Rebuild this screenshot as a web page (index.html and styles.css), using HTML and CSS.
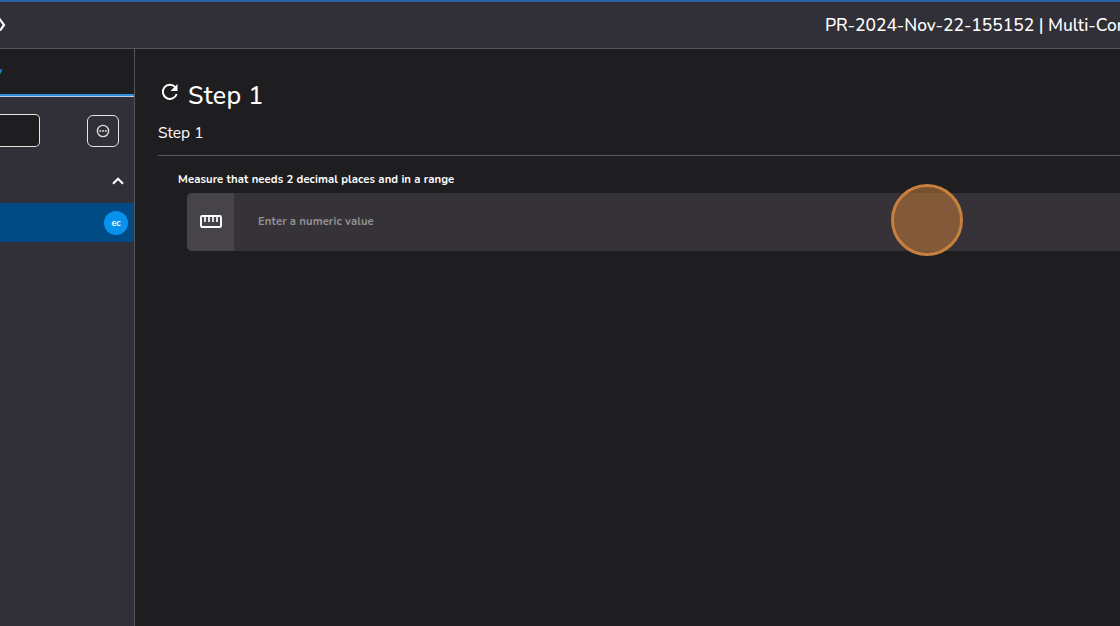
FILE: index.html
```html
<!DOCTYPE html>
<html lang="en">
<head>
  <meta charset="UTF-8">
  <title>Step 1</title>
  <link rel="stylesheet" href="styles.css">
</head>
<body>
  <header class="topbar">
    <svg class="back" width="6" height="18" viewBox="0 0 6 18"><path d="M-4 9L0 3.500L4 9L0 14.500" fill="none" stroke="#fff" stroke-width="2.200"/></svg>
    <span class="title">PR-2024-Nov-22-155152 | Multi-Con</span>
  </header>

  <div class="page">
    <aside class="sidebar">
      <div class="tab"><span>y</span></div>
      <div class="tools">
        <div class="search"></div>
        <button class="more" aria-label="More">
          <svg width="14" height="14" viewBox="0 0 14 14"><circle cx="7" cy="7" r="5.600" fill="none" stroke="#ddd" stroke-width="1.400"/><path d="M3.300 7h1.900M6.050 7h1.900M8.800 7h1.900" stroke="#ddd" stroke-width="1.600"/></svg>
        </button>
      </div>
      <div class="group">
        <svg width="12" height="8" viewBox="0 0 12 8"><path d="M1 6.700L6 1.700L11 6.700" fill="none" stroke="#fff" stroke-width="2.100"/></svg>
      </div>
      <div class="item"><span class="avatar">ec</span></div>
    </aside>

    <main class="content">
      <div class="heading">
        <svg width="18" height="18" viewBox="0 0 18 18"><path d="M14.300 4.200A7.100 7.100 0 1 0 15.700 11" fill="none" stroke="#fff" stroke-width="1.900"/><path d="M16.500 1v7h-7z" fill="#fff"/></svg>
        <h1>Step 1</h1>
      </div>
      <p class="subtitle">Step 1</p>
      <div class="measure">
        <label class="label" for="value">Measure that needs 2 decimal places and in a range</label>
        <div class="field">
          <div class="ruler">
            <svg width="22" height="13" viewBox="0 0 22 13"><rect x="1" y="1" width="20" height="11" rx="1.300" fill="none" stroke="#fff" stroke-width="1.900"/><path d="M5 1v6M9 1v6M13 1v6M17 1v6" stroke="#fff" stroke-width="1.700"/></svg>
          </div>
          <input id="value" type="text" placeholder="Enter a numeric value">
        </div>
      </div>
    </main>
  </div>

  <div class="click-marker"></div>
</body>
</html>
```

FILE: styles.css
```css
* { box-sizing: border-box; }
body { margin: 0; height: 626px; overflow: hidden; display: flex; flex-direction: column; background: #1e1e20; color: #fff; font-family: Nunito, Lato, sans-serif; }
svg { display: block; flex: none; }

.topbar { height: 49px; flex: none; display: flex; align-items: center; overflow: hidden; background: #312f37; border-top: 2px solid #2b60a6; border-bottom: 1px solid #56545b; }
.back { margin-top: 0; }
.title { margin: -1px 0 0 819px; font-size: 17.45px; font-weight: 500; line-height: 24px; white-space: nowrap; }

.page { flex: 1; display: flex; }
.sidebar { width: 135px; flex: none; background: #312f37; border-right: 1px solid #56545b; }
.tab { height: 48px; display: flex; align-items: center; background: #1e1e20; border-bottom: 1px solid #b4cfe8; box-shadow: inset 0 -2px #2f90d8; color: #2196e3; font-size: 12px; font-weight: bold; }
.tab span { margin: -4px 0 0 -4px; }
.tools { display: flex; justify-content: space-between; padding: 17px 15px 0 0; }
.search { width: 40px; height: 33px; background: #1e1e20; border: 1px solid #e4e4e4; border-left: 0; border-radius: 0 5px 5px 0; }
.more { width: 32px; height: 32px; margin-top: 1px; padding: 0 0 1px; display: flex; align-items: center; justify-content: center; background: none; border: 1px solid #e4e4e4; border-radius: 6px; }
.group { height: 56px; display: flex; justify-content: flex-end; padding: 30px 10px 0 0; }
.item { height: 39px; display: flex; align-items: center; justify-content: flex-end; padding-right: 6px; background: #004b85; }
.avatar { width: 24px; height: 24px; border-radius: 50%; background: #0892ed; font-size: 9px; font-weight: bold; line-height: 24px; text-align: center; }

.content { flex: 1; min-width: 0; padding: 28px 0 0 23px; }
.heading { height: 36px; display: flex; gap: 9px; padding: 0 0 0 3px; }
.heading svg { margin-top: 6px; }
h1 { margin: 0; font-size: 25px; font-weight: 500; line-height: 38px; letter-spacing: 0.3px; }
.subtitle { height: 43px; margin: 0; padding-top: 9px; border-bottom: 1px solid #59575d; font-size: 15.5px; line-height: 22px; }
.measure { padding: 16px 0 0 20px; }
.label { display: block; height: 21px; font-size: 11.3px; font-weight: bold; line-height: 16px; letter-spacing: 0.1px; }
.field { height: 58px; margin-left: 9px; display: flex; background: #363338; border-radius: 5px 0 0 5px; overflow: hidden; }
.ruler { width: 47px; flex: none; display: flex; align-items: center; justify-content: center; padding-bottom: 1px; background: #464449; }
.field input { flex: 1; min-width: 0; padding: 0 24px 1px; background: none; border: 0; outline: 0; color: #fff; font-family: inherit; font-size: 11.3px; font-weight: bold; letter-spacing: 0.1px; }
.field input::placeholder { color: #929094; }

/* highlight over the spot being clicked */
.click-marker { position: absolute; left: 891px; top: 184px; width: 72px; height: 72px; border-radius: 50%; background: rgba(207, 129, 58, 0.5); border: 3px solid #c7803f; }
```
